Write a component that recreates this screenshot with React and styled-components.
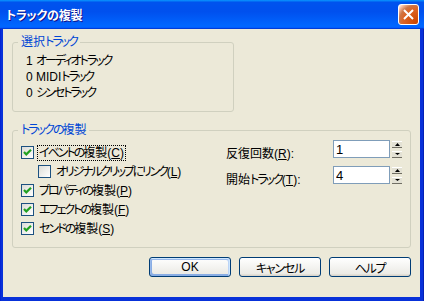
import React from "react";
import styled, { createGlobalStyle } from "styled-components";

const Global = createGlobalStyle`
  html, body { margin: 0; padding: 0; background: #fff; overflow: hidden; }
  #root { width: 424px; height: 301px; }
`;

const UI_FONT = `"Liberation Sans", "Noto Sans CJK JP", sans-serif`;

const Window = styled.div`
  width: 424px;
  height: 301px;
  display: flex;
  flex-direction: column;
  font-family: ${UI_FONT};
  font-size: 12px;
  font-feature-settings: "palt";
  color: #000;
  background: #0831d9;
`;

const TitleBar = styled.div`
  flex: none;
  height: 29px;
  display: flex;
  align-items: center;
  justify-content: space-between;
  padding: 0 5px 0 6px;
  background: linear-gradient(180deg, #0997ff, #0053ee 8%, #0050ee 40%, #06f 88%, #06f 93%, #005bff 95%, #003dd7 96%, #003dd7);
`;

const Title = styled.span`
  color: #fff;
  font-weight: bold;
  font-size: 12px;
  letter-spacing: -0.2px;
  text-shadow: 1px 1px #0f1089;
`;

const CloseButton = styled.div`
  width: 21px;
  height: 21px;
  box-sizing: border-box;
  border: 1px solid #fff;
  border-radius: 3px;
  display: flex;
  align-items: center;
  justify-content: center;
  background: radial-gradient(circle at 90% 90%, #cc4600 0%, #dc6527 55%, #cd7546 70%, #ffccb2 90%, #fff 100%);
`;

const Frame = styled.div`
  flex: 1;
  display: flex;
  padding: 0 4px 4px 3px;
  background: linear-gradient(90deg, #0019cf, #0831d9 1px, #0831d9 calc(100% - 1px), #001090);
`;

const Client = styled.div`
  flex: 1;
  display: flex;
  flex-direction: column;
  padding: 5px 9px 0 9px;
  background: #ece9d8;
`;

const Group = styled.fieldset`
  margin: 0;
  margin-top: ${(p) => p.$mt || 0}px;
  padding: 0;
  border: 1px solid #d0d0bf;
  border-radius: 3px;
  min-width: 0;
  box-sizing: border-box;
  width: ${(p) => (p.$w ? `${p.$w}px` : "auto")};
  height: ${(p) => p.$h}px;
`;

const Legend = styled.legend`
  margin-left: 5px;
  padding: 0 3px;
  line-height: 16px;
  color: #0046d5;
`;

const Kana = styled.span`
  letter-spacing: ${(p) => p.$ls}px;
`;

const InfoList = styled.div`
  padding: 3px 0 0 13px;
`;

const InfoLine = styled.div`
  line-height: 16px;
  white-space: nowrap;
`;

const CopyBody = styled.div`
  display: flex;
  align-items: flex-start;
  justify-content: space-between;
  padding: 0 8px 0 8px;
`;

const CheckColumn = styled.div`
  display: flex;
  flex-direction: column;
  margin-top: 5px;
`;

const CheckRow = styled.div`
  display: flex;
  align-items: center;
  gap: 4px;
  height: 19px;
  padding-left: ${(p) => (p.$indent ? 17 : 0)}px;
  white-space: nowrap;
`;

const Box = styled.span`
  flex: none;
  width: 13px;
  height: 13px;
  box-sizing: border-box;
  border: 1px solid #1c5180;
  background: linear-gradient(135deg, #dcdcd7, #fff);
  display: flex;
  align-items: center;
  justify-content: center;
`;

const CheckText = styled.span`
  padding: 0 1px;
  line-height: 14px;
  outline: ${(p) => (p.$focus ? "1px dotted #000" : "none")};
`;

const FieldColumn = styled.div`
  display: flex;
  flex-direction: column;
  gap: 8px;
  margin-top: 2px;
`;

const FieldRow = styled.div`
  display: flex;
  align-items: center;
  height: 18px;
`;

const FieldLabel = styled.span`
  width: 107px;
  padding-top: 6px;
  white-space: nowrap;
`;

const NumberInput = styled.input`
  width: 57px;
  height: 18px;
  box-sizing: border-box;
  border: 1px solid #7f9db9;
  background: #fff;
  padding: 0 0 0 2px;
  margin: 0;
  font-family: "Liberation Sans", sans-serif;
  font-size: 13px;
  color: #000;
  outline: none;
`;

const Spin = styled.div`
  display: flex;
  flex-direction: column;
  justify-content: space-between;
  width: 10px;
  height: 17px;
  margin-left: 2px;
`;

const SpinButton = styled.div`
  height: 7px;
  box-sizing: border-box;
  border-top: 1px solid #fff;
  border-bottom: 1px solid #716f64;
  background: #e3e1d4;
  display: flex;
  align-items: center;
  justify-content: center;
`;

const ButtonRow = styled.div`
  display: flex;
  justify-content: flex-end;
  gap: 8px;
  margin-top: 9px;
`;

const Button = styled.div`
  width: 82px;
  height: 20px;
  box-sizing: border-box;
  border: 1px solid #003c74;
  border-radius: 3px;
  display: flex;
  align-items: center;
  justify-content: center;
  background: linear-gradient(180deg, #fff, #ecebe6 86%, #d6d0c5);
  box-shadow: ${(p) =>
    p.$default
      ? "inset -1px 1px #cee7ff, inset 1px 2px #98b8ea, inset -2px 2px #bcd4f6, inset 1px -1px #89ade4, inset 2px -2px #89ade4"
      : "none"};
`;

/* Tightens runs of kana (which are proportional and narrow in the original UI font). */
const Jp = ({ text, ls = -2 }) =>
  text.split(/([\u3040-\u30ff]+)/).map((part, i) =>
    i % 2 === 1 ? (
      <Kana key={i} $ls={ls}>
        {part}
      </Kana>
    ) : (
      part
    )
  );

const Check = () => (
  <svg width="11" height="11" viewBox="0 0 11 11">
    <path d="M2 5 L4.3 7.4 L9 2.8" fill="none" stroke="#21a121" strokeWidth="2.2" />
  </svg>
);

const Key = ({ k, colon }) => (
  <>
    (<u>{k}</u>){colon ? ":" : ""}
  </>
);

const CheckBox = ({ checked, indent, focus, ls, text, k }) => (
  <CheckRow $indent={indent}>
    <Box>{checked && <Check />}</Box>
    <CheckText $focus={focus}>
      <Jp text={text} ls={ls} />
      <Key k={k} />
    </CheckText>
  </CheckRow>
);

const UpArrow = () => (
  <svg width="5" height="3" viewBox="0 0 5 3">
    <path d="M2.5 0 L5 3 L0 3 Z" fill="#000" />
  </svg>
);

const DownArrow = () => (
  <svg width="5" height="2" viewBox="0 0 5 2">
    <path d="M0 0 L5 0 L2.5 2 Z" fill="#000" />
  </svg>
);

const SpinField = ({ text, k, value }) => (
  <FieldRow>
    <FieldLabel>
      <Jp text={text} />
      <Key k={k} colon />
    </FieldLabel>
    <NumberInput readOnly value={value} />
    <Spin>
      <SpinButton>
        <UpArrow />
      </SpinButton>
      <SpinButton>
        <DownArrow />
      </SpinButton>
    </Spin>
  </FieldRow>
);

export default function App() {
  return (
    <>
      <Global />
      <Window>
        <TitleBar>
          <Title>トラックの複製</Title>
          <CloseButton>
            <svg width="13" height="13" viewBox="0 0 13 13">
              <path d="M2 2 L11 11 M11 2 L2 11" stroke="#fff" strokeWidth="2" />
            </svg>
          </CloseButton>
        </TitleBar>
        <Frame>
          <Client>
            <Group $w={222} $h={78}>
              <Legend>
                <Jp text="選択トラック" />
              </Legend>
              <InfoList>
                <InfoLine>
                  <Jp text="1 オーディオトラック" />
                </InfoLine>
                <InfoLine>
                  <Jp text="0 MIDIトラック" />
                </InfoLine>
                <InfoLine>
                  <Jp text="0 シンセトラック" />
                </InfoLine>
              </InfoList>
            </Group>
            <Group $mt={10} $h={126}>
              <Legend>
                <Jp text="トラックの複製" />
              </Legend>
              <CopyBody>
                <CheckColumn>
                  <CheckBox checked focus text="イベントの複製" k="C" />
                  <CheckBox indent ls={-2.2} text="オリジナルクリップにリンク" k="L" />
                  <CheckBox checked text="プロパティの複製" k="P" />
                  <CheckBox checked text="エフェクトの複製" k="F" />
                  <CheckBox checked text="センドの複製" k="S" />
                </CheckColumn>
                <FieldColumn>
                  <SpinField text="反復回数" k="R" value="1" />
                  <SpinField text="開始トラック" k="T" value="4" />
                </FieldColumn>
              </CopyBody>
            </Group>
            <ButtonRow>
              <Button $default>OK</Button>
              <Button>
                <Jp text="キャンセル" ls={-1.2} />
              </Button>
              <Button>
                <Jp text="ヘルプ" ls={-1.2} />
              </Button>
            </ButtonRow>
          </Client>
        </Frame>
      </Window>
    </>
  );
}
